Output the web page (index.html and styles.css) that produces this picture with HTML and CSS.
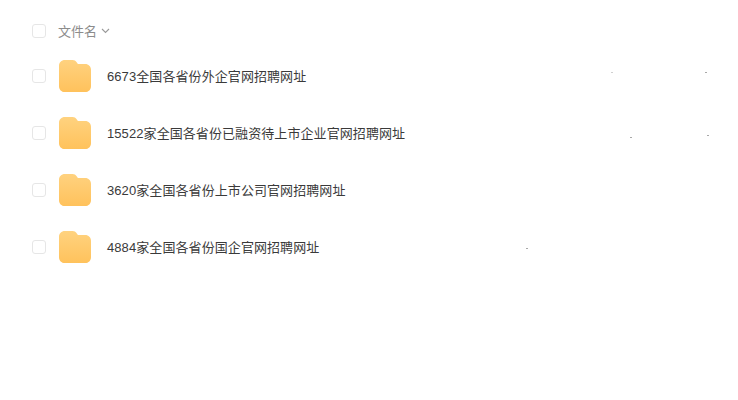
FILE: index.html
```html
<!DOCTYPE html>
<html lang="zh">
<head>
<meta charset="utf-8">
<title>文件名</title>
<link rel="stylesheet" href="styles.css">
</head>
<body>
<main class="list">
  <div class="header">
    <span class="check"></span>
    <span class="head-label">文件名</span>
    <svg class="chev" width="9" height="6" viewBox="0 0 9 6"><path d="M1 1l3.5 3.5L8 1" fill="none" stroke="#9a9a9a" stroke-width="1.1"/></svg>
  </div>
  <div class="row">
    <span class="check"></span>
    <svg class="folder" width="32" height="32" viewBox="0 0 33 33"><use href="#f"/></svg>
    <span class="name">6673全国各省份外企官网招聘网址</span>
  </div>
  <div class="row">
    <span class="check"></span>
    <svg class="folder" width="32" height="32" viewBox="0 0 33 33"><use href="#f"/></svg>
    <span class="name">15522家全国各省份已融资待上市企业官网招聘网址</span>
  </div>
  <div class="row">
    <span class="check"></span>
    <svg class="folder" width="32" height="32" viewBox="0 0 33 33"><use href="#f"/></svg>
    <span class="name">3620家全国各省份上市公司官网招聘网址</span>
  </div>
  <div class="row">
    <span class="check"></span>
    <svg class="folder" width="32" height="32" viewBox="0 0 33 33"><use href="#f"/></svg>
    <span class="name">4884家全国各省份国企官网招聘网址</span>
  </div>
</main>
<svg class="defs" width="0" height="0">
  <defs>
    <linearGradient id="g" x1="0" y1="0" x2="0" y2="1">
      <stop offset="0" stop-color="#ffd27f"/>
      <stop offset="1" stop-color="#ffc25c"/>
    </linearGradient>
    <path id="f" fill="url(#g)" d="M6 0h8c2 0 3 .8 4.2 2.200L19.500 4H27c3.500 0 6 2.500 6 6v17c0 3.500-2.500 6-6 6H6c-3.500 0-6-2.500-6-6V6c0-3.500 2.500-6 6-6z"/>
  </defs>
</svg>
<i class="speck s1"></i><i class="speck s2"></i><i class="speck s3"></i><i class="speck s4"></i><i class="speck s5"></i>
</body>
</html>
```
FILE: styles.css
```css
html, body {
  margin: 0;
  height: 100%;
  background: #fff;
  overflow: hidden;
}
body {
  font-family: "Liberation Sans", "Noto Sans CJK SC", sans-serif;
  position: relative;
}
.list {
  display: flex;
  flex-direction: column;
  padding: 20px 0 0 32px;
}
.header {
  display: flex;
  align-items: center;
  height: 21px;
  margin-bottom: 6px;
}
.row {
  display: flex;
  align-items: center;
  height: 57px;
}
.check {
  width: 12px;
  height: 12px;
  border: 1px solid #e6e6e6;
  border-radius: 3px;
  flex: none;
}
.head-label {
  margin-left: 12px;
  font-size: 13px;
  color: #8c8c8c;
}
.chev {
  margin-left: 4px;
}
.folder {
  margin-left: 13px;
  flex: none;
}
.name {
  margin-left: 16px;
  font-size: 13px;
  letter-spacing: 0.08px;
  color: #3a3a3a;
  white-space: nowrap;
}
.defs {
  position: absolute;
}
.speck {
  position: absolute;
  width: 2px;
  height: 1px;
  background: #a8a8a8;
}
.s1 { left: 630px; top: 137px; }
.s2 { left: 707px; top: 135px; }
.s3 { left: 526px; top: 248px; }
.s4 { left: 705px; top: 72px; }
.s5 { left: 611px; top: 72px; background: #d0d0d0; }
```
